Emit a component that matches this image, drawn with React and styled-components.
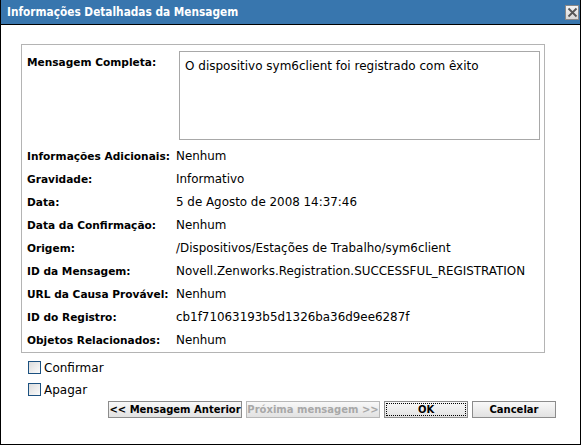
import React from "react";
import styled, { createGlobalStyle } from "styled-components";

const GlobalStyle = createGlobalStyle`
    body {
        margin: 0;
        background: #fff;
        font-family: "DejaVu Sans", "Liberation Sans", sans-serif;
        font-size: 11px;
        color: #000;
    }
`;

const rows = [
    { label: "Informações Adicionais:", value: "Nenhum" },
    { label: "Gravidade:", value: "Informativo" },
    { label: "Data:", value: "5 de Agosto de 2008 14:37:46" },
    { label: "Data da Confirmação:", value: "Nenhum" },
    { label: "Origem:", value: "/Dispositivos/Estações de Trabalho/sym6client" },
    { label: "ID da Mensagem:", value: "Novell.Zenworks.Registration.SUCCESSFUL_REGISTRATION" },
    { label: "URL da Causa Provável:", value: "Nenhum" },
    { label: "ID do Registro:", value: "cb1f71063193b5d1326ba36d9ee6287f" },
    { label: "Objetos Relacionados:", value: "Nenhum" },
];

function App() {
    return (
        <>
            <GlobalStyle />
            <Dialog>
                <TitleBar>
                    <Title>Informações Detalhadas da Mensagem</Title>
                    <CloseButton aria-label="Fechar">
                        <svg width="11" height="11" viewBox="0 0 11 11">
                            <path d="M1.5 1.5 L9.5 9.5 M9.5 1.5 L1.5 9.5" stroke="#555" strokeWidth="1.8" />
                        </svg>
                    </CloseButton>
                </TitleBar>

                <Body>
                    <Panel>
                        <Label>Mensagem Completa:</Label>
                        <MessageBox>O dispositivo sym6client foi registrado com êxito</MessageBox>
                        {rows.map((row) => (
                            <React.Fragment key={row.label}>
                                <Label>{row.label}</Label>
                                <Value>{row.value}</Value>
                            </React.Fragment>
                        ))}
                    </Panel>

                    <Checks>
                        <CheckRow>
                            <Box />
                            Confirmar
                        </CheckRow>
                        <CheckRow>
                            <Box />
                            Apagar
                        </CheckRow>
                    </Checks>

                    <Buttons>
                        <Button $wide>&lt;&lt; Mensagem Anterior</Button>
                        <Button $wide disabled>Próxima mensagem &gt;&gt;</Button>
                        <Button $focused>OK</Button>
                        <Button>Cancelar</Button>
                    </Buttons>
                </Body>
            </Dialog>
        </>
    );
}

const Dialog = styled.div`
    width: 581px;
    height: 445px;
    box-sizing: border-box;
    border: 1px solid #000;
    border-top: none;
    background: #fff;
    display: flex;
    flex-direction: column;
`;

const TitleBar = styled.div`
    height: 24px;
    background: #3876ae;
    border-bottom: 1px solid #000;
    display: flex;
    align-items: center;
    justify-content: space-between;
    padding: 0 1px 0 6px;
`;

const Title = styled.span`
    color: #fff;
    font-weight: bold;
    font-size: 11.75px;
    font-family: "DejaVu Sans Condensed", "DejaVu Sans", sans-serif;
`;

const CloseButton = styled.div`
    width: 14px;
    height: 15px;
    box-sizing: border-box;
    border: 1px solid #888;
    background: linear-gradient(#f4f4f4, #d8d8d8);
    display: flex;
    align-items: center;
    justify-content: center;
`;

const Body = styled.div`
    flex: 1;
    padding: 19px 24px 0 20px;
    display: flex;
    flex-direction: column;
`;

const Panel = styled.div`
    width: 524px;
    box-sizing: border-box;
    border: 1px solid #b4b4b4;
    padding: 6px 4px 0 5px;
    display: grid;
    grid-template-columns: 149px 1fr;
    grid-auto-rows: 23px;
    grid-template-rows: 94px;
`;

const Label = styled.div`
    font-weight: bold;
    font-size: 10.6px;
    line-height: 23px;
    white-space: nowrap;
`;

const Value = styled.div`
    font-size: 11.9px;
    line-height: 23px;
    white-space: nowrap;
`;

const MessageBox = styled.div`
    margin-left: 3px;
    height: 89px;
    box-sizing: border-box;
    border: 1px solid #a8a8a8;
    padding: 7px 5px;
    font-size: 12px;
    line-height: 14px;
`;

const Checks = styled.div`
    display: flex;
    flex-direction: column;
    padding: 8px 0 0 7px;
    gap: 9px;
`;

const CheckRow = styled.label`
    display: flex;
    align-items: center;
    gap: 3px;
    height: 13px;
    font-size: 12px;
`;

const Box = styled.span`
    width: 13px;
    height: 13px;
    box-sizing: border-box;
    border: 1px solid #1c5180;
    background: linear-gradient(135deg, #dcdcdc, #fbfbfb);
`;

const Buttons = styled.div`
    display: flex;
    justify-content: flex-end;
    gap: 4px;
    margin-top: 5px;
`;

const Button = styled.button`
    width: ${(p) => (p.$wide ? "134px" : "84px")};
    height: 17px;
    padding: 0;
    box-sizing: border-box;
    border: 1px solid #8c8c8c;
    background: linear-gradient(#f8f8f8, #e2e2e2);
    font-family: "DejaVu Sans", sans-serif;
    font-weight: bold;
    font-size: 10px;
    line-height: 15px;
    white-space: nowrap;
    color: #000;
    outline: ${(p) => (p.$focused ? "1px dotted #000" : "none")};
    outline-offset: -3px;

    &:disabled {
        color: #a8a8a8;
        border-color: #b8b8b8;
    }
`;

export default App;
